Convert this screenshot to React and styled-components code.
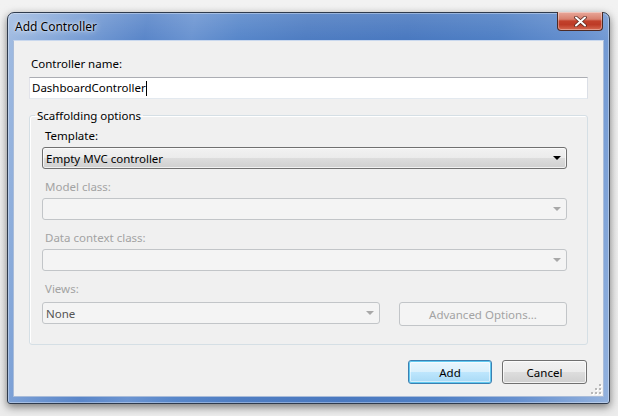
import React from "react";
import styled, { createGlobalStyle } from "styled-components";

const GlobalStyle = createGlobalStyle`
  html, body {
    margin: 0;
    padding: 0;
    background: #eeeeee;
  }
  body {
    font-family: "Noto Sans", "Open Sans", sans-serif;
    font-size: 11.5px;
    color: #000;
  }
`;

const Page = styled.div`
  width: 618px;
  height: 416px;
  box-sizing: border-box;
  padding: 12px 0 0 7px;
  overflow: hidden;
  background: linear-gradient(180deg, #f2f2f2 0%, #ececec 100%);
`;

const Window = styled.div`
  width: 603px;
  height: 392px;
  box-sizing: border-box;
  display: flex;
  flex-direction: column;
  padding: 0 5px 6px 5px;
  border: 1px solid #2f3b4d;
  border-radius: 7px 7px 3px 3px;
  box-shadow: 0 3px 9px rgba(0, 0, 0, 0.5), inset 0 0 0 1px rgba(255, 255, 255, 0.35);
  background:
    linear-gradient(180deg, rgba(255, 255, 255, 0.12) 0px, rgba(255, 255, 255, 0) 26px),
    linear-gradient(100deg, #a3bde2 0%, #86a8d9 8%, #6c94d0 15%, #5a86c9 21%, #6b94d1 28%, #5887ca 35%, #4f7dc2 45%, #4a79c0 60%, #5080c5 74%, #6690cf 86%, #93b2de 100%);
`;

const TitleBar = styled.div`
  height: 27px;
  display: flex;
  justify-content: space-between;
  align-items: flex-start;
`;

const Title = styled.div`
  padding: 6px 0 0 2px;
  line-height: 15px;
  font-size: 12px;
  text-shadow: 0 0 6px rgba(255, 255, 255, 0.9), 0 0 2px rgba(255, 255, 255, 0.8);
`;

const CloseButton = styled.div`
  width: 46px;
  height: 19px;
  margin: -1px 1px 0 0;
  box-sizing: border-box;
  border: 1px solid #4d2a24;
  border-top: none;
  border-radius: 0 0 4px 4px;
  background: linear-gradient(180deg, #e9a99b 0%, #d8806e 40%, #c2412c 50%, #bd3a26 70%, #d66a52 100%);
  box-shadow: inset 0 0 0 1px rgba(255, 255, 255, 0.35);
  display: flex;
  align-items: center;
  justify-content: center;
`;

const Client = styled.div`
  flex: 1;
  position: relative;
  display: flex;
  flex-direction: column;
  padding: 15px 15px 0 15px;
  background: #f0f0f0;
  border: 1px solid #a9bcd9;
  border-top-color: #c9d8ee;
`;

const Label = styled.div`
  line-height: 15px;
  padding-left: ${(p) => p.$indent || 2}px;
  margin-bottom: ${(p) => p.$gap || 4}px;
  color: ${(p) => (p.$disabled ? "#a3a3a3" : "#000")};
`;

const TextBox = styled.div`
  height: 22px;
  box-sizing: border-box;
  border: 1px solid;
  border-color: #abadb3 #dbdfe6 #e3e9ef #e2e3ea;
  background: #fff;
  padding-left: 2px;
  line-height: 20px;
  display: flex;
  align-items: center;
`;

const Caret = styled.span`
  display: inline-block;
  width: 1px;
  height: 15px;
  background: #000;
`;

const Group = styled.fieldset`
  margin: 9px 0 0 0;
  padding: 5px 20px 18px 12px;
  min-width: 0;
  border: 1px solid #d5dfe5;
  border-radius: 3px;
  box-shadow: inset 1px 1px 0 #fff;
`;

const Legend = styled.legend`
  padding: 0 2px;
  margin-left: -7px;
  line-height: 15px;
`;

const Field = styled.div`
  margin-bottom: ${(p) => p.$gap ?? 10}px;
`;

const Combo = styled.div`
  height: ${(p) => p.$h || 22}px;
  width: ${(p) => (p.$w ? `${p.$w}px` : "auto")};
  box-sizing: border-box;
  display: flex;
  align-items: center;
  justify-content: space-between;
  padding: 0 5px 0 3px;
  border: 1px solid ${(p) => (p.$disabled ? "#c2c5c8" : "#707070")};
  border-radius: 3px;
  color: ${(p) => (p.$disabled ? "#555" : "#000")};
  background: ${(p) =>
    p.$disabled
      ? "#f4f4f4"
      : "linear-gradient(180deg, #f2f2f2 0%, #ebebeb 50%, #dddddd 51%, #cfcfcf 100%)"};
  box-shadow: ${(p) => (p.$disabled ? "none" : "inset 0 0 0 1px rgba(255,255,255,0.7)")};
`;

const Arrow = styled.span`
  width: 0;
  height: 0;
  border-left: 4px solid transparent;
  border-right: 4px solid transparent;
  border-top: 4px solid ${(p) => (p.$disabled ? "#a8a8a8" : "#000")};
`;

const Row = styled.div`
  display: flex;
  align-items: flex-start;
  gap: 19px;
`;

const Button = styled.div`
  width: ${(p) => p.$w}px;
  height: 24px;
  box-sizing: border-box;
  display: flex;
  align-items: center;
  justify-content: center;
  border-radius: 3px;
  border: 1px solid #707070;
  color: #000;
  background: linear-gradient(180deg, #f2f2f2 0%, #ebebeb 50%, #dddddd 51%, #cfcfcf 100%);
  box-shadow: inset 0 0 0 1px rgba(255, 255, 255, 0.75);

  ${(p) =>
    p.$default &&
    `
    border-color: #3c7fb1;
    background: linear-gradient(180deg, #eaf6fd 0%, #d9f0fc 50%, #bee6fd 51%, #a7d9f5 100%);
    box-shadow: inset 0 0 0 1px #60c9f0, inset 0 0 0 2px rgba(255,255,255,0.5);
  `}

  ${(p) =>
    p.$disabled &&
    `
    border-color: #c2c5c8;
    background: #f4f4f4;
    color: #a3a3a3;
    box-shadow: none;
  `}
`;

const ButtonRow = styled.div`
  display: flex;
  justify-content: flex-end;
  gap: 10px;
  margin-top: 15px;
  padding-right: 1px;
`;

const Grip = styled.svg`
  position: absolute;
  right: 1px;
  bottom: 1px;
`;

function CloseGlyph() {
  return (
    <svg width="13" height="11" viewBox="0 0 13 11">
      <path d="M2 1.5 L11 9.5 M11 1.5 L2 9.5" stroke="#5a2a22" strokeWidth="3.6" strokeLinecap="round" />
      <path d="M2 1.5 L11 9.5 M11 1.5 L2 9.5" stroke="#fff" strokeWidth="2" strokeLinecap="round" />
    </svg>
  );
}

function ResizeGrip() {
  const dots = [
    [8, 0],
    [8, 4], [4, 4],
    [8, 8], [4, 8], [0, 8],
  ];
  return (
    <Grip width="11" height="11" viewBox="0 0 11 11">
      {dots.map(([x, y], i) => (
        <g key={i}>
          <rect x={x + 1} y={y + 1} width="2" height="2" fill="#fff" />
          <rect x={x} y={y} width="2" height="2" fill="#b8b8b8" />
        </g>
      ))}
    </Grip>
  );
}

export default function App() {
  return (
    <>
      <GlobalStyle />
      <Page>
        <Window>
          <TitleBar>
            <Title>Add Controller</Title>
            <CloseButton>
              <CloseGlyph />
            </CloseButton>
          </TitleBar>
          <Client>
            <Label $gap={6}>Controller name:</Label>
            <TextBox>
              DashboardController
              <Caret />
            </TextBox>

            <Group>
              <Legend>Scaffolding options</Legend>
              <Field>
                <Label $indent={3}>Template:</Label>
                <Combo>
                  <span>Empty MVC controller</span>
                  <Arrow />
                </Combo>
              </Field>
              <Field>
                <Label $indent={3} $disabled>Model class:</Label>
                <Combo $disabled>
                  <span />
                  <Arrow $disabled />
                </Combo>
              </Field>
              <Field>
                <Label $indent={3} $disabled>Data context class:</Label>
                <Combo $disabled>
                  <span />
                  <Arrow $disabled />
                </Combo>
              </Field>
              <Field $gap={0}>
                <Label $indent={3} $disabled $gap={6}>Views:</Label>
                <Row>
                  <Combo $disabled $w={338}>
                    <span>None</span>
                    <Arrow $disabled />
                  </Combo>
                  <Button $w={168} $disabled>Advanced Options...</Button>
                </Row>
              </Field>
            </Group>

            <ButtonRow>
              <Button $w={84} $default>Add</Button>
              <Button $w={85}>Cancel</Button>
            </ButtonRow>
            <ResizeGrip />
          </Client>
        </Window>
      </Page>
    </>
  );
}
